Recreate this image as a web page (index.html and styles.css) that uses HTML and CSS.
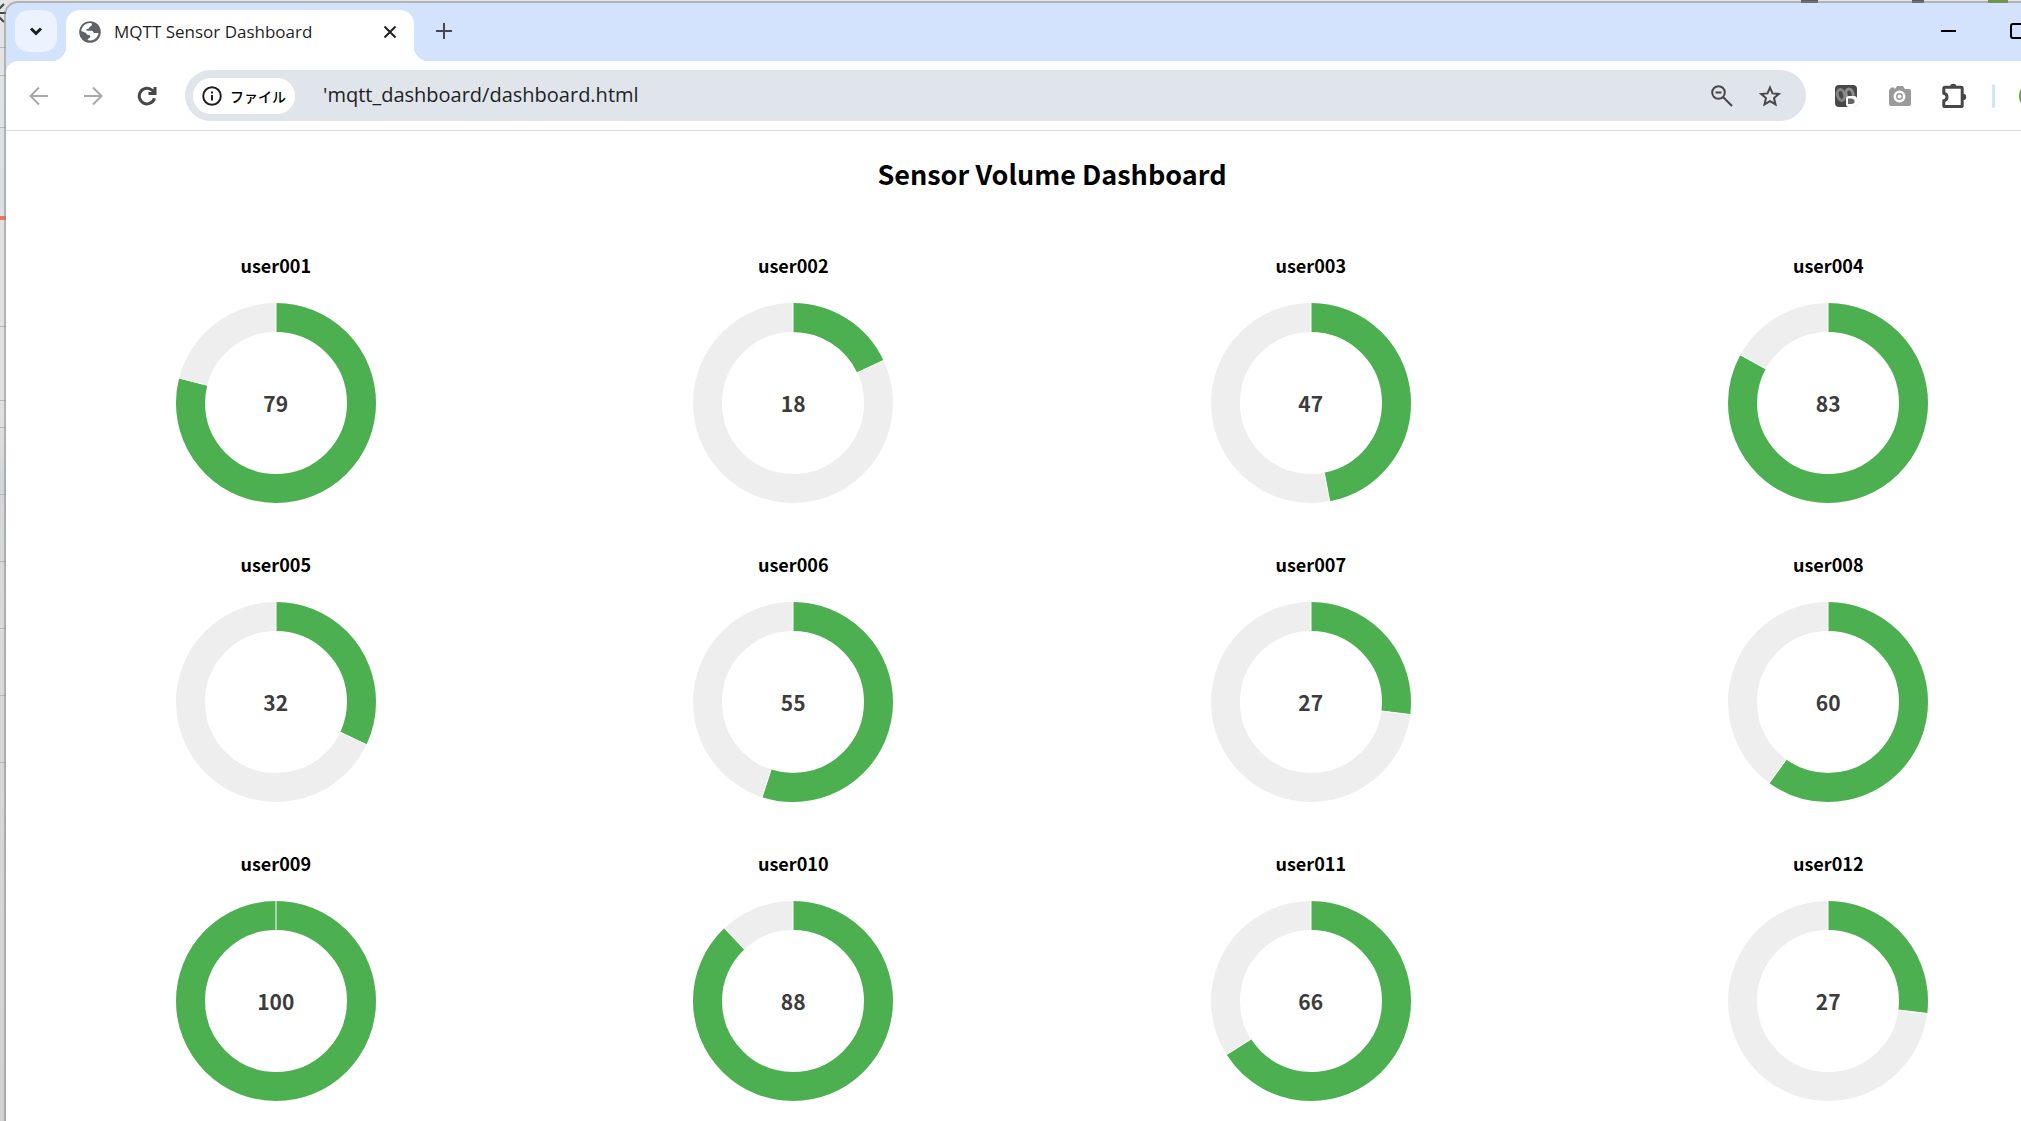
FILE: index.html
```html
<!DOCTYPE html>
<html lang="ja">
<head>
<meta charset="utf-8">
<title>MQTT Sensor Dashboard</title>
<link rel="stylesheet" href="styles.css">
</head>
<body>
<div class="desktop">
<svg class="behind" width="6" height="24" viewBox="0 0 6 24"><path class="line" d="M0 13h6M-5 13L4 4M-5 13l9 9"/></svg>
<div class="window">
  <header class="tabstrip">
    <button class="tab-search" aria-label="Search tabs"><svg width="14" height="14" viewBox="0 0 14 14"><path class="bold-line" d="M2 4.500l5 5 5-5"/></svg></button>
    <div class="tab">
      <svg class="globe" width="22" height="22" viewBox="0 0 22 22"><circle cx="11" cy="11" r="10.800" fill="#5f6368"/><path fill="#fff" d="M12.500 2.200c1 1.200.3 2.800-1.300 3.200-.8.300-.7 1.100-1.200 1.800-.6.800-1.800.3-2.500 1-.5.600.1 1.400 1 1.500h4.200c1.300 0 1.500 1.700 2.500 2.200 1 .4 2.300-.2 4.400.3-.5 2.500-2 5-4.500 6.200-2 .9-4.500 1.300-6.600.7.300-1.500 1.800-1.700 2.600-2.800.7-1.100-.2-2-1.500-2.200-1.500-.2-2-.8-2.500-2L2.300 10c.2-3 2-5.600 4.600-7 1.800-.9 3.700-1.200 5.600-.8z"/></svg>
      <span class="tab-title">MQTT Sensor Dashboard</span>
      <button class="icon-btn tab-close" aria-label="Close tab"><svg width="14" height="14" viewBox="0 0 14 14"><path class="bold-line thin" d="M1.500 1.500l11 11M12.500 1.500l-11 11"/></svg></button>
    </div>
    <button class="icon-btn new-tab" aria-label="New tab"><svg width="16" height="16" viewBox="0 0 16 16"><path class="line" d="M8 0v16M0 8h16"/></svg></button>
    <div class="window-controls">
      <button class="icon-btn" aria-label="Minimize"><svg width="16" height="16" viewBox="0 0 16 16"><path d="M0 8h15" stroke="#000" stroke-width="2"/></svg></button>
      <button class="icon-btn" aria-label="Maximize"><svg width="16" height="16" viewBox="0 0 16 16"><rect x="1" y="1" width="14" height="14" rx="2" fill="none" stroke="#000" stroke-width="2"/></svg></button>
    </div>
  </header>
  <nav class="toolbar">
    <button class="icon-btn nav-btn" aria-label="Back"><svg width="20" height="20" viewBox="0 0 20 20"><path class="line faint" d="M19 10H2M10 1.500L1.500 10l8.500 8.500"/></svg></button>
    <button class="icon-btn nav-btn" aria-label="Forward"><svg width="20" height="20" viewBox="0 0 20 20"><path class="line faint" d="M1 10h17M10 1.500l8.500 8.500-8.500 8.500"/></svg></button>
    <button class="icon-btn nav-btn" aria-label="Reload"><svg width="20" height="20" viewBox="0 0 20 20"><path class="line heavy" d="M17.500 12.300A7.800 7.800 0 1 1 15.500 4.500L17.600 7M18 1v6.600h-6.500"/></svg></button>
    <div class="omnibox">
      <button class="chip"><svg width="20" height="20" viewBox="0 0 20 20"><circle class="line" cx="10" cy="10" r="8.800"/><path class="line" d="M10 9v5.500M10 5.500v2"/></svg>ファイル</button>
      <input class="url" type="text" aria-label="Address" value="'mqtt_dashboard/dashboard.html">
      <button class="icon-btn" aria-label="Zoom"><svg width="22" height="22" viewBox="0 0 22 22"><circle class="line" cx="7.500" cy="7.500" r="6.300"/><path class="line" d="M12 12l9 9M4.500 7.500h6"/></svg></button>
      <button class="icon-btn" aria-label="Bookmark"><svg width="22" height="22" viewBox="0 0 22 22"><path class="line" d="M11 2.600l2.500 5.800 6.300.6-4.800 4.100 1.500 6.300-5.500-3.300-5.500 3.300L7 13.100 2.200 9l6.300-.6z"/></svg></button>
    </div>
    <div class="extensions">
      <button class="icon-btn" aria-label="Recorder"><svg width="22" height="22" viewBox="0 0 22 22"><rect width="22" height="22" rx="4" fill="#484848"/><ellipse cx="6" cy="10" rx="3.500" ry="5.500" transform="rotate(-15 6 10)" fill="none" stroke="#858585" stroke-width="3"/><ellipse cx="14.500" cy="9" rx="3.500" ry="5" transform="rotate(-15 14.500 9)" fill="none" stroke="#8f8f8f" stroke-width="3"/><rect x="11" y="11" width="11" height="11" rx="3" fill="#fff"/><path fill="#666" d="M13 13.500h4l2.500 1.500v3L17 19h-4z"/></svg></button>
      <button class="icon-btn" aria-label="Screenshot"><svg width="22" height="22" viewBox="0 0 22 22"><path fill="#9a9a9a" d="M1 4l1-1.500h3L6 4l2-3h6l2 3h4q2 0 2 2v13q0 2-2 2H2q-2 0-2-2V6q0-1.500 1-2z"/><circle cx="10.500" cy="11.500" r="4.700" fill="#9a9a9a" stroke="#fff" stroke-width="2.500"/><circle cx="10.500" cy="11.500" r="2" fill="#fff"/></svg></button>
      <button class="icon-btn" aria-label="Extensions"><svg width="26" height="26" viewBox="0 0 26 26"><path class="line puzzle" d="M4 4.200h16q1.200 0 1.200 1.200v17q0 1.200-1.200 1.200H4q-1.200 0-1.200-1.200v-4.600Q6 17 6 14T2.800 10.200V5.400Q2.800 4.200 4 4.200z"/><path fill="#474747" d="M9 4a3.200 3.200 0 0 1 6.400 0zM22 10.800a3.200 3.200 0 0 1 0 6.400z"/></svg></button>
      <span class="divider"></span>
      <button class="avatar" aria-label="Profile"></button>
    </div>
  </nav>
  <main class="page">
    <h1>Sensor Volume Dashboard</h1>
    <div class="gauges">
      <section class="gauge"><h2>user001</h2><div class="dial"><svg viewBox="0 0 200 200"><circle class="track" cx="100" cy="100" r="85.500"/><circle class="fill" cx="100" cy="100" r="85.500" pathLength="100" stroke-dasharray="79 100"/><path class="seam" d="M100 0v29"/><path class="seam" d="M100 0v29" transform="rotate(284.400 100 100)"/></svg><span>79</span></div></section>
      <section class="gauge"><h2>user002</h2><div class="dial"><svg viewBox="0 0 200 200"><circle class="track" cx="100" cy="100" r="85.500"/><circle class="fill" cx="100" cy="100" r="85.500" pathLength="100" stroke-dasharray="18 100"/><path class="seam" d="M100 0v29"/><path class="seam" d="M100 0v29" transform="rotate(64.800 100 100)"/></svg><span>18</span></div></section>
      <section class="gauge"><h2>user003</h2><div class="dial"><svg viewBox="0 0 200 200"><circle class="track" cx="100" cy="100" r="85.500"/><circle class="fill" cx="100" cy="100" r="85.500" pathLength="100" stroke-dasharray="47 100"/><path class="seam" d="M100 0v29"/><path class="seam" d="M100 0v29" transform="rotate(169.200 100 100)"/></svg><span>47</span></div></section>
      <section class="gauge"><h2>user004</h2><div class="dial"><svg viewBox="0 0 200 200"><circle class="track" cx="100" cy="100" r="85.500"/><circle class="fill" cx="100" cy="100" r="85.500" pathLength="100" stroke-dasharray="83 100"/><path class="seam" d="M100 0v29"/><path class="seam" d="M100 0v29" transform="rotate(298.800 100 100)"/></svg><span>83</span></div></section>
      <section class="gauge"><h2>user005</h2><div class="dial"><svg viewBox="0 0 200 200"><circle class="track" cx="100" cy="100" r="85.500"/><circle class="fill" cx="100" cy="100" r="85.500" pathLength="100" stroke-dasharray="32 100"/><path class="seam" d="M100 0v29"/><path class="seam" d="M100 0v29" transform="rotate(115.200 100 100)"/></svg><span>32</span></div></section>
      <section class="gauge"><h2>user006</h2><div class="dial"><svg viewBox="0 0 200 200"><circle class="track" cx="100" cy="100" r="85.500"/><circle class="fill" cx="100" cy="100" r="85.500" pathLength="100" stroke-dasharray="55 100"/><path class="seam" d="M100 0v29"/><path class="seam" d="M100 0v29" transform="rotate(198 100 100)"/></svg><span>55</span></div></section>
      <section class="gauge"><h2>user007</h2><div class="dial"><svg viewBox="0 0 200 200"><circle class="track" cx="100" cy="100" r="85.500"/><circle class="fill" cx="100" cy="100" r="85.500" pathLength="100" stroke-dasharray="27 100"/><path class="seam" d="M100 0v29"/><path class="seam" d="M100 0v29" transform="rotate(97.200 100 100)"/></svg><span>27</span></div></section>
      <section class="gauge"><h2>user008</h2><div class="dial"><svg viewBox="0 0 200 200"><circle class="track" cx="100" cy="100" r="85.500"/><circle class="fill" cx="100" cy="100" r="85.500" pathLength="100" stroke-dasharray="60 100"/><path class="seam" d="M100 0v29"/><path class="seam" d="M100 0v29" transform="rotate(216 100 100)"/></svg><span>60</span></div></section>
      <section class="gauge"><h2>user009</h2><div class="dial"><svg viewBox="0 0 200 200"><circle class="track" cx="100" cy="100" r="85.500"/><circle class="fill" cx="100" cy="100" r="85.500"/><path class="seam" d="M100 0v29"/></svg><span>100</span></div></section>
      <section class="gauge"><h2>user010</h2><div class="dial"><svg viewBox="0 0 200 200"><circle class="track" cx="100" cy="100" r="85.500"/><circle class="fill" cx="100" cy="100" r="85.500" pathLength="100" stroke-dasharray="88 100"/><path class="seam" d="M100 0v29"/><path class="seam" d="M100 0v29" transform="rotate(316.800 100 100)"/></svg><span>88</span></div></section>
      <section class="gauge"><h2>user011</h2><div class="dial"><svg viewBox="0 0 200 200"><circle class="track" cx="100" cy="100" r="85.500"/><circle class="fill" cx="100" cy="100" r="85.500" pathLength="100" stroke-dasharray="66 100"/><path class="seam" d="M100 0v29"/><path class="seam" d="M100 0v29" transform="rotate(237.600 100 100)"/></svg><span>66</span></div></section>
      <section class="gauge"><h2>user012</h2><div class="dial"><svg viewBox="0 0 200 200"><circle class="track" cx="100" cy="100" r="85.500"/><circle class="fill" cx="100" cy="100" r="85.500" pathLength="100" stroke-dasharray="27 100"/><path class="seam" d="M100 0v29"/><path class="seam" d="M100 0v29" transform="rotate(97.200 100 100)"/></svg><span>27</span></div></section>
    </div>
  </main>
</div>
</div>
</body>
</html>
```
FILE: styles.css
```css
* { box-sizing: border-box; }

body {
  margin: 0;
  overflow: hidden;
  font-family: "Noto Sans CJK JP", sans-serif;
  color: #000;
}

button {
  border: 0;
  padding: 0;
  background: none;
  font: inherit;
  color: inherit;
}

svg { display: block; }

.line, .bold-line {
  fill: none;
  stroke: #474747;
  stroke-width: 2;
}
.bold-line { stroke: #1f1f1f; stroke-width: 3; }
.bold-line.thin { stroke-width: 2; }
.faint { stroke: #a9a9a9; }
.heavy { stroke-width: 3; }
.puzzle { stroke-width: 3; }

/* slivers of the window behind show at the top and left */
.desktop {
  --rule: linear-gradient(#b4bbc2, #b4bbc2);
  position: relative;
  min-height: 100vh;
  padding: 1px 0 0 4px;
  background:
    linear-gradient(#e8795f, #e8795f) 0 216px / 6px 4px no-repeat,
    var(--rule) 0 47px / 6px 1px no-repeat,
    var(--rule) 0 75px / 6px 1px no-repeat,
    var(--rule) 0 127px / 6px 1px no-repeat,
    var(--rule) 0 326px / 6px 1px no-repeat,
    var(--rule) 0 400px / 6px 1px no-repeat,
    var(--rule) 0 427px / 6px 1px no-repeat,
    repeating-linear-gradient(#b4bbc2 0 1px, transparent 1px 67px) 0 494px / 6px 269px no-repeat,
    linear-gradient(#5c5c5c, #5c5c5c) 1801px 0 / 17px 3px no-repeat,
    linear-gradient(#5c5c5c, #5c5c5c) 1912px 0 / 12px 3px no-repeat,
    linear-gradient(#689f38, #689f38) 1988px 0 / 20px 3px no-repeat,
    linear-gradient(#e4e5e6, #dcdfe3 216px, #e2e2e2 220px, #e0e0e0 420px, #d4d6d9 480px, #dadada 600px, #d2d2d2);
}
.behind {
  position: absolute;
  top: 0;
  left: 0;
}

/* the browser window runs past the right edge of the screen */
.window {
  position: relative;
  min-height: 100vh;
  margin-right: -77px;
  border: 2px solid rgba(130, 130, 130, 0.5);
  border-width: 2px 0 0 2px;
  border-radius: 14px 0 0 0;
  background: #d3e3fd padding-box;
  overflow: hidden;
}

.icon-btn {
  display: flex;
  align-items: center;
  justify-content: center;
  width: 32px;
  height: 32px;
}

.tabstrip {
  display: flex;
  height: 58px;
  padding: 7px 0 0 9px;
}
.tab-search {
  display: flex;
  align-items: center;
  justify-content: center;
  width: 42px;
  height: 42px;
  border-radius: 14px;
  background: #ecf2fe;
}
.tab {
  position: relative;
  display: flex;
  align-items: center;
  width: 348px;
  margin-left: 9px;
  padding: 0 8px 8px 13px;
  border-radius: 14px 14px 0 0;
  background: #fff;
}
.tab::before, .tab::after {
  content: "";
  position: absolute;
  bottom: 0;
  width: 14px;
  height: 14px;
}
.tab::before { right: 100%; background: radial-gradient(circle at 0 0, transparent 14px, #fff 14px); }
.tab::after { left: 100%; background: radial-gradient(circle at 100% 0, transparent 14px, #fff 14px); }
.tab-title {
  flex: 1;
  margin-left: 13px;
  font: 17px/24px "Open Sans", sans-serif;
  color: #1f1f1f;
}
.new-tab { margin: 5px 0 0 14px; }
.window-controls {
  display: flex;
  gap: 37px;
  margin: 5px 64px 0 auto;
}

.toolbar {
  display: flex;
  align-items: center;
  height: 70px;
  padding-left: 17px;
  border-bottom: 1px solid #dcdcdc;
  border-radius: 12px 0 0 0;
  background: #fff;
}
.nav-btn { margin-right: 22px; }
.omnibox {
  display: flex;
  align-items: center;
  flex: 1;
  gap: 16px;
  height: 51px;
  padding: 0 20px 0 8px;
  border-radius: 26px;
  background: #e0e5ec;
}
.chip {
  display: flex;
  align-items: center;
  gap: 8px;
  width: 102px;
  height: 36px;
  padding-left: 9px;
  border-radius: 18px;
  background: #fff;
  font-size: 14px;
  font-weight: 500;
  white-space: nowrap;
}
.chip .line { stroke: #1f1f1f; }
.url {
  flex: 1;
  min-width: 0;
  margin-left: 12px;
  padding: 0 0 2px;
  border: 0;
  background: none;
  font: 20px/28px "Open Sans", sans-serif;
  color: #1f1f1f;
}
.extensions {
  display: flex;
  align-items: center;
  gap: 22px;
  width: 292px;
  padding-left: 24px;
}
.divider {
  width: 3px;
  height: 24px;
  border-radius: 2px;
  background: #d3e3fd;
}
.avatar {
  width: 28px;
  height: 28px;
  margin-left: 2px;
  border-radius: 50%;
  background: #689f38;
}

.page {
  min-height: 990px;
  padding: 23px 11px 0;
  background: #fff;
}
h1, h2 { margin: 0; text-align: center; }
h1 { font-size: 27px; line-height: 40px; }
h2 { font-size: 18px; line-height: 28px; }
.gauges {
  display: grid;
  grid-template-columns: repeat(4, 1fr);
  row-gap: 47px;
  margin-top: 57px;
}
.gauge {
  display: flex;
  flex-direction: column;
  align-items: center;
  gap: 24px;
}
.dial {
  display: grid;
  place-items: center;
  width: 200px;
  height: 200px;
}
.dial > * { grid-area: 1 / 1; }
.dial svg { width: 100%; height: 100%; }
.dial span {
  font-size: 21px;
  line-height: 28px;
  font-weight: 700;
  color: #3c3c3c;
}
.track, .fill {
  fill: none;
  stroke: #eee;
  stroke-width: 29;
}
.fill {
  stroke: #4caf50;
  transform: rotate(-90deg);
  transform-origin: 100px 100px;
}
.seam { stroke: #fff; stroke-width: 1; }
```
